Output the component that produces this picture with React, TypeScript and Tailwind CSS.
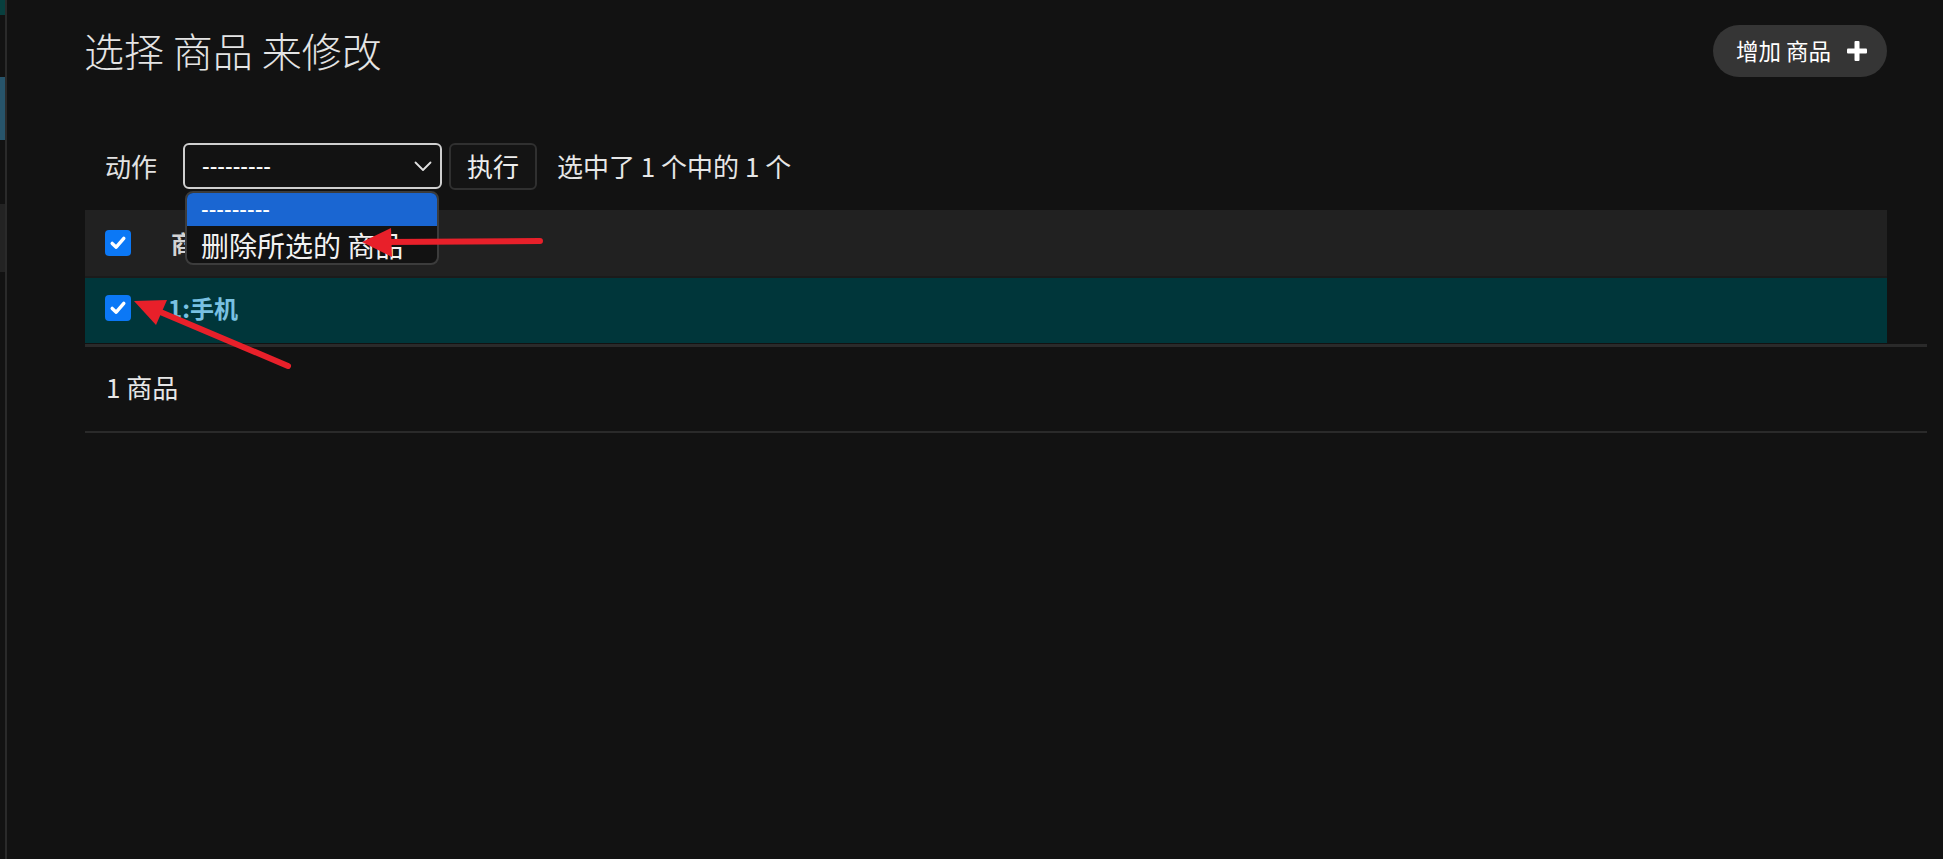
import React from 'react'

const Check = () => (
  <div className='flex h-[26px] w-[26px] items-center justify-center rounded-[4px] bg-[#0b78f6]'>
    <svg width='18' height='18' viewBox='0 0 18 18'>
      <path d='M3.2 9.4 L7.2 13.2 L14.8 4.4' fill='none' stroke='#ffffff' strokeWidth='3.4' strokeLinecap='round' strokeLinejoin='round' />
    </svg>
  </div>
)

const Plus = () => (
  <svg width='20' height='20' viewBox='0 0 20 20'>
    <rect x='7.5' y='0' width='5' height='20' rx='1' fill='#ffffff' />
    <rect x='0' y='7.5' width='20' height='5' rx='1' fill='#ffffff' />
  </svg>
)

const Chevron = () => (
  <svg width='18' height='11' viewBox='0 0 18 11'>
    <path d='M1.5 1.5 L9 9 L16.5 1.5' fill='none' stroke='#e0e0e0' strokeWidth='1.8' strokeLinecap='round' strokeLinejoin='round' />
  </svg>
)

// red annotation arrows drawn over the screenshot
const Arrows = () => (
  <svg className='pointer-events-none absolute left-0 top-0 z-20' width='1943' height='859' viewBox='0 0 1943 859'>
    <line x1='540' y1='241' x2='386' y2='242' stroke='#e8202a' strokeWidth='6' strokeLinecap='round' />
    <polygon points='362,242 391,228 392,257' fill='#e8202a' />
    <line x1='288' y1='366' x2='158' y2='311' stroke='#e8202a' strokeWidth='6' strokeLinecap='round' />
    <polygon points='134,301 167,300 156,325' fill='#e8202a' />
  </svg>
)

const App = () => {
  return (
    <div className="relative flex h-[859px] w-full overflow-hidden bg-[#121212] font-['Noto_Sans_CJK_SC','Noto_Sans',sans-serif] text-[#e6e6e6]">
      <aside className='flex w-[5px] flex-col'>
        <div className='h-[15px] bg-[#083f3e]' />
        <div className='h-[62px]' />
        <div className='h-[63px] bg-[#27546a]' />
        <div className='h-[64px]' />
        <div className='h-[68px] bg-[#232323]' />
      </aside>
      <div className='w-[2px] bg-[#2a2a2a]' />

      <main className='flex-1 pl-[78px] pr-[16px] pt-[25px]'>
        <div className='mr-[40px] flex h-[52px] items-start justify-between'>
          <h1 className='ml-[-1px] mt-[5px] text-[40px] font-light leading-none text-[#e4e4e4]'>选择 商品 来修改</h1>
          <button className='flex h-[52px] w-[174px] items-center gap-[16px] rounded-full bg-[#353535] pl-[23px] text-[22.5px] text-white'>
            <span>增加 商品</span>
            <Plus />
          </button>
        </div>

        <div className='mt-[66px] flex h-[46px] items-center pl-[20px] text-[26px] leading-none'>
          <span className='text-[#e2e2e2]'>动作</span>
          <div className='relative ml-[26px] flex h-[46px] w-[259px] items-center justify-between rounded-[6px] border-2 border-[#cfcfcf] bg-[#121212] pl-[17px] pr-[8px]'>
            <span className="font-['Liberation_Sans',sans-serif] text-[23px] text-white">---------</span>
            <Chevron />
            <div className='absolute left-0 top-[46px] z-10 w-[254px] overflow-hidden rounded-[8px] border-2 border-[#3c3c3c] bg-[#121212]'>
              <div className="flex h-[33px] items-center bg-[#1a66d2] pl-[14px] font-['Liberation_Sans',sans-serif] text-[23px] text-white">---------</div>
              <div className='flex h-[37px] items-center pl-[14px] text-[28px] text-[#f2f2f2]'>删除所选的 商品</div>
            </div>
          </div>
          <button className='ml-[7px] flex h-[47px] w-[88px] items-center justify-center rounded-[6px] border-2 border-[#303030] bg-[#141414] text-[26px] text-[#ededed]'>
            执行
          </button>
          <span className='ml-[20px] text-[#e6e6e6]'>选中了 1 个中的 1 个</span>
        </div>

        <div className='mr-[40px] mt-[21px]'>
          <div className='flex h-[66px] items-center bg-[#212121] pl-[20px]'>
            <Check />
            <span className='ml-[40px] text-[24px] font-bold text-[#d4d4d4]'>商品</span>
          </div>
          <div className='h-[2px] bg-[#1b1b1b]' />
          <div className='flex h-[65px] items-center bg-[#00363a] pb-[6px] pl-[20px]'>
            <Check />
            <span className='ml-[37px] text-[24px] font-bold text-[#79c1e2]'>1:手机</span>
          </div>
        </div>
        <div className='mt-[1px] h-[3px] bg-[#2a2a2a]' />
        <div className='flex h-[84px] items-center pb-[5px] pl-[21px] text-[26px] text-[#e6e6e6]'>1 商品</div>
        <div className='h-[2px] bg-[#2a2a2a]' />
      </main>

      <Arrows />
    </div>
  )
}

export default App
